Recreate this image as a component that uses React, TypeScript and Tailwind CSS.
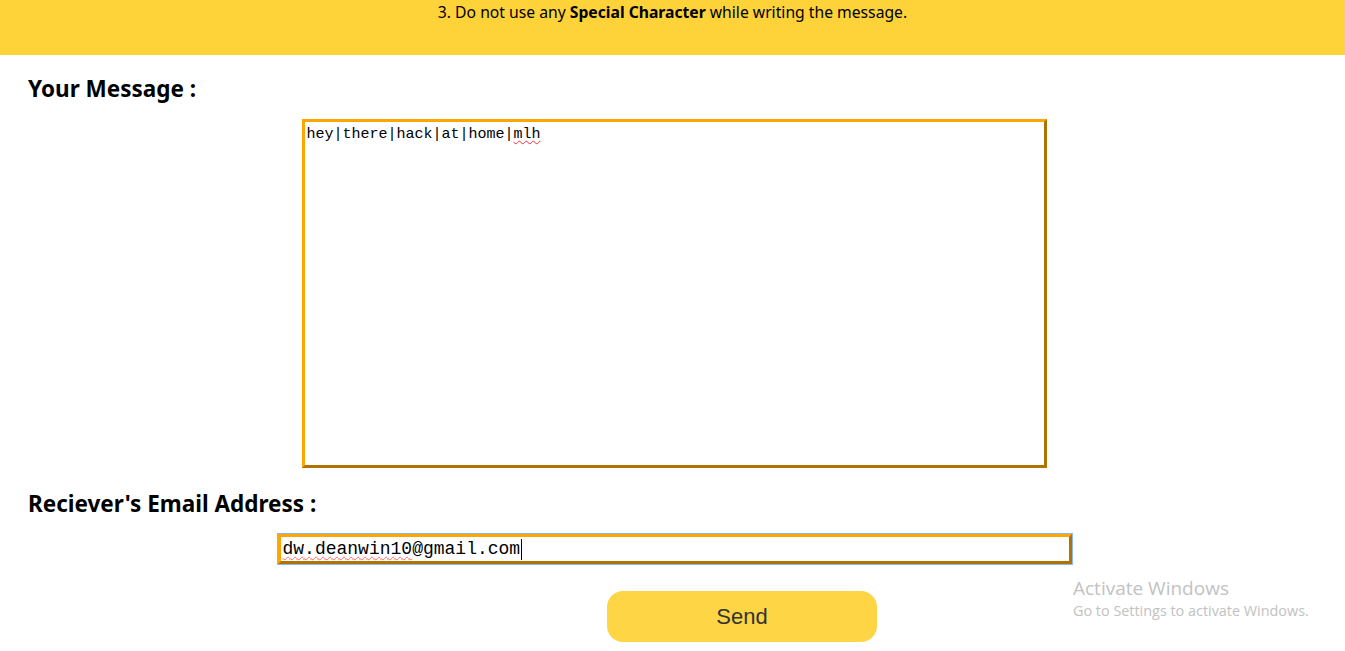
import React from "react";

export default function App() {
  return (
    <div className="relative min-h-[651px] w-full bg-white" style={{ fontFamily: '"Open Sans", "Noto Sans", sans-serif' }}>
      <div className="flex h-[55px] justify-center bg-[#fed339] pt-[2px]">
        <p className="text-[15.7px] leading-[20px] text-black" style={{ fontFamily: '"Noto Sans", sans-serif' }}>
          3. Do not use any <b>Special Character</b> while writing the message.
        </p>
      </div>

      <h2 className="mt-[19px] pl-[28px] text-[22.5px] font-bold leading-[30px] text-black" style={{ fontFamily: '"Noto Sans", sans-serif' }}>
        Your Message :
      </h2>

      <div className="mt-[15px] flex justify-center pl-[3px]">
        <div className="h-[349px] w-[745px] border-[3px] border-t-[#ffa500] border-l-[#ffa500] border-b-[#b07300] border-r-[#b07300] bg-white px-[2px] pt-[3px]">
          <div className="text-[15px] leading-[20px] text-black" style={{ fontFamily: '"Liberation Mono", "DejaVu Sans Mono", monospace' }}>
            hey|there|hack|at|home|<span className="underline decoration-wavy decoration-red-500 decoration-1 underline-offset-2">mlh</span>
          </div>
        </div>
      </div>

      <h2 className="mt-[21px] pl-[28px] text-[22.5px] font-bold leading-[30px] text-black" style={{ fontFamily: '"Noto Sans", sans-serif' }}>
        Reciever's Email Address :
      </h2>

      <div className="mt-[15px] flex justify-center pl-[4px]">
        <div className="h-[30px] w-[794px] ring-1 ring-[#8ab8ff]">
          <div className="flex h-full items-center border-[3px] border-t-[#ffa500] border-l-[#ffa500] border-b-[#b07300] border-r-[#b07300] bg-white pl-[2px]">
            <span className="text-[18px] leading-[22px] text-black" style={{ fontFamily: '"Liberation Mono", "DejaVu Sans Mono", monospace' }}>
              <span className="underline decoration-wavy decoration-red-400 decoration-1 underline-offset-2">dw.deanwin10</span>@gmail.com
            </span>
            <span className="ml-[1px] h-[21px] w-[1px] bg-black" />
          </div>
        </div>
      </div>

      <div className="mt-[27px] flex pl-[607px]">
        <button className="h-[51px] w-[270px] rounded-[16px] bg-[#fed545] text-[22px] text-[#333]" style={{ fontFamily: '"Liberation Sans", Arial, sans-serif' }}>
          Send
        </button>
      </div>

      <div className="pointer-events-none absolute left-[1073px] top-[576px] text-[#c2c2c2]" style={{ fontFamily: '"Open Sans", "Noto Sans", sans-serif' }}>
        <div className="text-[19px] leading-[25px]">Activate Windows</div>
        <div className="text-[14.4px] leading-[20px]">Go to Settings to activate Windows.</div>
      </div>
    </div>
  );
}
